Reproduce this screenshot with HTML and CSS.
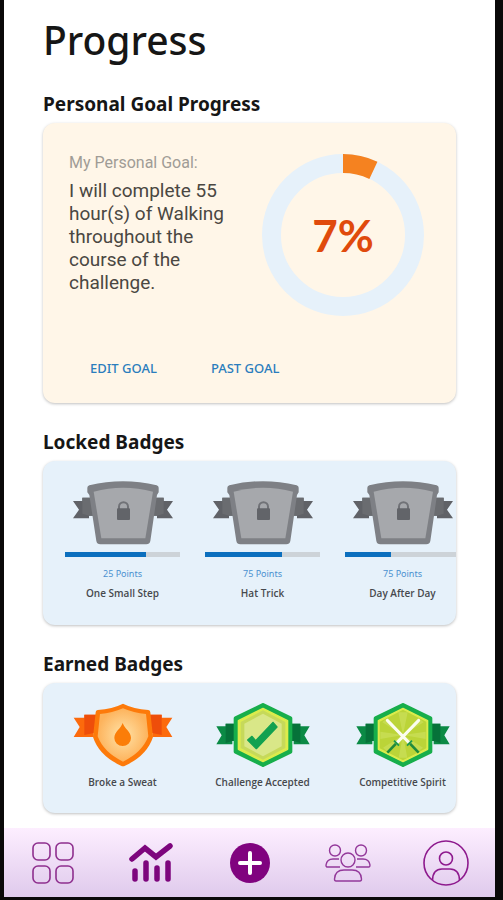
FILE: index.html
```html
<!DOCTYPE html>
<html lang="en">
<head>
    <meta charset="UTF-8">
    <meta name="viewport" content="width=device-width, initial-scale=1.0">
    <title>Progress</title>
    <link rel="stylesheet" href="styles.css">
</head>
<body>
    <div class="screen">
        <main class="content">
            <h1>Progress</h1>

            <section>
                <h2>Personal Goal Progress</h2>
                <div class="card goal-card">
                    <div class="goal-row">
                        <div class="goal-text">
                            <p class="goal-label">My Personal Goal:</p>
                            <p class="goal-desc">I will complete 55 hour(s) of Walking throughout the course of the challenge.</p>
                        </div>
                        <div class="ring">
                            <svg viewBox="0 0 162 162" aria-hidden="true">
                                <circle cx="81" cy="81" r="71.5" fill="none" stroke="#e6f1fa" stroke-width="19"/>
                                <circle cx="81" cy="81" r="71.5" fill="none" stroke="#f58220" stroke-width="19" pathLength="100" stroke-dasharray="7 93" transform="rotate(-90 81 81)"/>
                            </svg>
                            <span class="ring-value">7%</span>
                        </div>
                    </div>
                    <div class="goal-actions">
                        <button type="button" class="link-btn">EDIT GOAL</button>
                        <button type="button" class="link-btn">PAST GOAL</button>
                    </div>
                </div>
            </section>

            <section>
                <h2>Locked Badges</h2>
                <ul class="card badges locked">
                    <li class="badge">
                        <svg class="badge-icon" viewBox="0 0 300 192" aria-hidden="true">
                            <defs>
                                <g id="lockedBadge">
                                    <path d="M0 60H28V50H60V104H48V112H0L18 86Z M300 60H272V50H240V104H252V112H300L282 86Z" fill="#606267"/>
                                    <path d="M28 50H60V104H48L28 98Z M272 50H240V104H252L272 98Z" fill="#6a6c70"/>
                                    <path d="M43 20Q43 15 49 13Q150 -12 251 13Q257 15 257 20L257 34L252 42L232 180Q230 190 220 190H82Q72 190 70 180L49 42L43 34Z" fill="#7e8085"/>
                                    <path d="M62 32Q150 8 240 32L217 172H85Z" fill="#a6a8ac"/>
                                    <path d="M138 84V77A13 13 0 0 1 165 77V84" fill="none" stroke="#707277" stroke-width="6"/>
                                    <rect x="132" y="82" width="39" height="35" rx="3" fill="#626469"/>
                                </g>
                            </defs>
                            <use href="#lockedBadge"/>
                        </svg>
                        <div class="bar"><div class="bar-fill" style="width: 70%"></div></div>
                        <p class="points">25 Points</p>
                        <p class="name">One Small Step</p>
                    </li>
                    <li class="badge">
                        <svg class="badge-icon" viewBox="0 0 300 192" aria-hidden="true"><use href="#lockedBadge"/></svg>
                        <div class="bar"><div class="bar-fill" style="width: 67%"></div></div>
                        <p class="points">75 Points</p>
                        <p class="name">Hat Trick</p>
                    </li>
                    <li class="badge">
                        <svg class="badge-icon" viewBox="0 0 300 192" aria-hidden="true"><use href="#lockedBadge"/></svg>
                        <div class="bar"><div class="bar-fill" style="width: 40%"></div></div>
                        <p class="points">75 Points</p>
                        <p class="name">Day After Day</p>
                    </li>
                </ul>
            </section>

            <section>
                <h2>Earned Badges</h2>
                <ul class="card badges earned">
                    <li class="badge">
                        <svg class="badge-icon" viewBox="0 0 300 192" aria-hidden="true">
                            <defs>
                                <radialGradient id="glow">
                                    <stop offset="0" stop-color="#ffe3a8"/>
                                    <stop offset="1" stop-color="#fdb35c"/>
                                </radialGradient>
                            </defs>
                            <path d="M2 44H34V35H70V90H62V102H2L20 72Z M298 44H266V35H230V90H238V102H298L280 72Z" fill="#fc6a0c"/>
                            <path d="M34 35H70V90H62L34 96Z M266 35H230V90H238L266 96Z" fill="#ee4e0a"/>
                            <path d="M150 2Q182 18 226 21Q232 22 232 28L240 102Q222 158 156 188Q150 191 144 188Q78 158 60 102L68 28Q68 22 74 21Q118 18 150 2Z" fill="#fd7a0a"/>
                            <path d="M150 16Q182 30 219 33L226 100Q208 148 150 176Q92 148 74 100L81 33Q118 30 150 16Z" fill="url(#glow)"/>
                            <path d="M149 60C143 78 124 86 124 105A25 24 0 0 0 174 105C174 86 155 78 149 60Z" fill="#fb7d08"/>
                        </svg>
                        <p class="name">Broke a Sweat</p>
                    </li>
                    <li class="badge">
                        <svg class="badge-icon" viewBox="0 0 300 192" aria-hidden="true">
                            <defs>
                                <g id="greenBadge">
                                    <path d="M10 70H38V62H66V114H58V124H10L26 97Z M290 70H262V62H234V114H242V124H290L274 97Z" fill="#0b8a45"/>
                                    <path d="M38 62H66V114H58L38 120Z M262 62H234V114H242L262 120Z" fill="#067239"/>
                                    <path d="M150 6L232 46V146L150 186L68 146V46Z" fill="#17ae4b" stroke="#17ae4b" stroke-width="12" stroke-linejoin="round"/>
                                    <path d="M150 16L224 53V139L150 176L76 139V53Z" fill="#dcec4c" stroke="#dcec4c" stroke-width="4" stroke-linejoin="round"/>
                                </g>
                            </defs>
                            <use href="#greenBadge"/>
                            <path d="M150 22L217 57V135L150 170L83 135V57Z" fill="#c6d95a"/>
                            <path d="M150 32L206 62V130L150 160L94 130V62Z" fill="#d9e788"/>
                            <path d="M104 111L117 100L128 113L180 58L192 72L130 137Z" fill="#12a150" stroke="#12a150" stroke-width="4" stroke-linejoin="round"/>
                        </svg>
                        <p class="name">Challenge Accepted</p>
                    </li>
                    <li class="badge">
                        <svg class="badge-icon" viewBox="0 0 300 192" aria-hidden="true">
                            <use href="#greenBadge"/>
                            <path d="M150 20L220 56V136L150 172L80 136V56Z" fill="#bbd438"/>
                            <path d="M150 96L136 28H164Z M150 96L196 44L212 58Z M150 96L218 86V108Z M150 96L210 134L194 146Z M150 96L163 164H137Z M150 96L104 146L90 134Z M150 96L82 108V86Z M150 96L88 58L104 44Z" fill="#c6dc50"/>
                            <path d="M103 52L170 121M197 52L130 121" stroke="#fbfdf0" stroke-width="9" stroke-linecap="round"/>
                            <path d="M162 128L177 113M138 128L123 113" stroke="#1e9a4c" stroke-width="6"/>
                            <path d="M171 122L197 149M129 122L103 149" stroke="#208a3c" stroke-width="8"/>
                        </svg>
                        <p class="name">Competitive Spirit</p>
                    </li>
                </ul>
            </section>
        </main>

        <nav class="tabs">
            <a href="#" aria-label="Dashboard">
                <svg width="42" height="42" viewBox="0 0 42 42" fill="none" stroke="#8e2f8e" stroke-width="1.6">
                    <rect x="1" y="1" width="17" height="17" rx="5"/>
                    <rect x="24" y="1" width="17" height="17" rx="5"/>
                    <rect x="1" y="24" width="17" height="17" rx="5"/>
                    <rect x="24" y="24" width="17" height="17" rx="5"/>
                </svg>
            </a>
            <a href="#" aria-label="Progress">
                <svg width="44" height="40" viewBox="0 0 44 40" fill="none" stroke="#7d057d" stroke-width="5.5" stroke-linecap="round">
                    <path d="M3 16L16 5L27 14L41 3"/>
                    <path d="M6 28V36M17 20V36M28 25V36M39 20V36"/>
                </svg>
            </a>
            <a href="#" aria-label="Add">
                <svg width="40" height="40" viewBox="0 0 40 40">
                    <circle cx="20" cy="20" r="20" fill="#80037f"/>
                    <path d="M20 10V30M10 20H30" stroke="#fff" stroke-width="4" stroke-linecap="round"/>
                </svg>
            </a>
            <a href="#" aria-label="Community">
                <svg width="46" height="38" viewBox="0 0 46 38" fill="none" stroke="#93389a" stroke-width="1.4">
                    <circle cx="10" cy="6.5" r="5.5"/>
                    <circle cx="36" cy="6.5" r="5.5"/>
                    <circle cx="23" cy="16" r="7"/>
                    <path d="M15 23H2Q1 23 1 21Q2 15 8 15H14M31 23H44Q45 23 45 21Q44 15 38 15H32"/>
                    <path d="M11 37Q9.5 37 9.5 35Q10 26 19 26H27Q36 26 36.5 35Q36.5 37 35 37Z"/>
                </svg>
            </a>
            <a href="#" aria-label="Profile">
                <svg width="46" height="46" viewBox="0 0 46 46" fill="none" stroke="#8e1a8e" stroke-width="1.6">
                    <circle cx="23" cy="23" r="22"/>
                    <circle cx="23" cy="18.5" r="6.5"/>
                    <path d="M9.5 40Q10 29 19 29H27Q36 29 36.5 40"/>
                </svg>
            </a>
        </nav>
    </div>
</body>
</html>
```

FILE: styles.css
```css
* {
    box-sizing: border-box;
}

body {
    margin: 0;
    font-family: "Noto Sans", "Open Sans", sans-serif;
    background-color: #0a0909;
    color: #161616;
}

h1, h2, p, ul {
    margin: 0;
    padding: 0;
}

.screen {
    display: flex;
    flex-direction: column;
    min-height: 100vh;
    border: solid #0a0909;
    border-width: 0 8px 3px 4px;
    background-color: #fff;
}

.content {
    flex: 1;
    padding: 12px 39px 15px 39px;
}

h1 {
    margin-bottom: 24px;
    font-size: 39px;
    line-height: 56px;
    font-weight: 500;
}

h2 {
    margin-bottom: 7px;
    font-size: 19px;
    line-height: 24px;
    font-weight: 700;
}

section + section {
    margin-top: 27px;
}

.card {
    border-radius: 12px;
    background-color: #e6f1fa;
    box-shadow: 0 1px 3px rgba(0, 0, 0, 0.25);
    overflow: hidden;
}

.goal-card {
    padding: 31px 32px 24px 26px;
    background-color: #fff6e8;
}

.goal-row {
    display: flex;
    justify-content: space-between;
}

.goal-text {
    width: 170px;
    font-family: Roboto, sans-serif;
}

.goal-label {
    margin-bottom: 8px;
    font-size: 16px;
    line-height: 17px;
    color: #a09c96;
}

.goal-desc {
    font-size: 19px;
    line-height: 23px;
    color: #4a4742;
}

.ring {
    display: grid;
    width: 162px;
    height: 162px;
    place-items: center;
}

.ring svg,
.ring-value {
    grid-area: 1 / 1;
}

.ring-value {
    font-family: Lato, sans-serif;
    font-size: 44px;
    font-weight: 700;
    color: #e04a0c;
}

.goal-actions {
    display: flex;
    gap: 54px;
    margin-top: 41px;
    padding-left: 21px;
}

.link-btn {
    padding: 0;
    border: none;
    background: none;
    font-family: "Noto Sans", sans-serif;
    font-size: 13px;
    line-height: 22px;
    font-weight: 500;
    color: #2a7dbd;
    cursor: pointer;
}

.badges {
    display: flex;
    gap: 25px;
    padding: 20px 0 24px 22px;
    list-style: none;
}

.badge {
    flex: 0 0 115px;
    text-align: center;
}

.badge-icon {
    display: block;
    width: 100px;
    height: 64px;
    margin: 0 auto 7px;
}

.bar {
    height: 5px;
    margin-bottom: 9px;
    background-color: #cdd3d8;
}

.bar-fill {
    height: 100%;
    background-color: #0c6fbe;
}

.points {
    margin-bottom: 3px;
    font-size: 9px;
    line-height: 16px;
    color: #4a90d0;
}

.name {
    font-family: "Open Sans", sans-serif;
    font-size: 10px;
    line-height: 16px;
    font-weight: 600;
    color: #46494d;
    white-space: nowrap;
}

.earned {
    padding-bottom: 23px;
}

.tabs {
    display: flex;
    height: 69px;
    background: linear-gradient(#fdeeff, #dfcaec);
}

.tabs a {
    display: flex;
    flex: 1;
    align-items: center;
    justify-content: center;
}
```
